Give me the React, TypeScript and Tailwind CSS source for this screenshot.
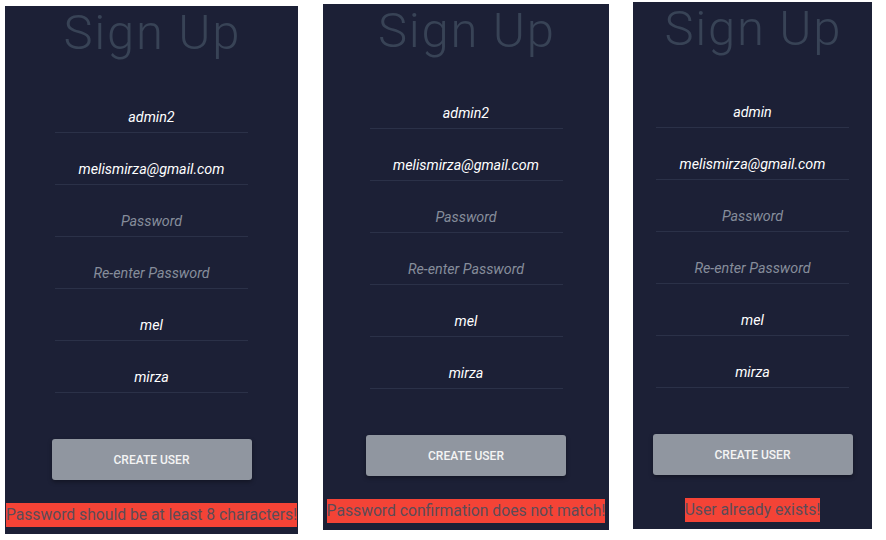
import React from "react";

type Field = { value: string; placeholder?: boolean };

function Panel({
  outer,
  fieldsMt,
  fields,
  error,
}: {
  outer: string;
  fieldsMt: string;
  fields: Field[];
  error: string;
}) {
  return (
    <div className={`${outer} bg-[#1c2036] flex flex-col items-center shrink-0`}>
      <h1 className="text-[49px] font-light leading-[53px] h-[53px] text-[#384356] tracking-[1.7px] pl-[1.7px]">
        Sign Up
      </h1>
      <div className={`${fieldsMt} flex flex-col w-[193px]`}>
        {fields.map((f, i) => (
          <div
            key={i}
            className="h-[52px] border-b border-[#2b3148] pt-[24px] text-center"
          >
            <span
              className={`italic text-[14.3px] leading-[16px] ${
                f.placeholder ? "text-[#868d9b]" : "text-white"
              }`}
            >
              {f.value}
            </span>
          </div>
        ))}
      </div>
      <button className="mt-[46px] w-[200px] h-[41px] rounded-[3px] bg-[#9096a0] text-[12px] font-medium text-[#f4f4f4] shadow-[0_2px_4px_rgba(0,0,0,0.35)]">
        CREATE USER
      </button>
      <div className="mt-[23px] h-[24px] bg-[#f44336] text-[15.7px] leading-[24px] text-[#5c4c58] whitespace-nowrap">
        {error}
      </div>
    </div>
  );
}

export default function App() {
  const base = (u: string): Field[] => [
    { value: u },
    { value: "melismirza@gmail.com" },
    { value: "Password", placeholder: true },
    { value: "Re-enter Password", placeholder: true },
    { value: "mel" },
    { value: "mirza" },
  ];
  return (
    <div
      className="w-[886px] h-[540px] bg-white flex items-start pl-[5px]"
      style={{ fontFamily: "Roboto, 'Liberation Sans', sans-serif" }}
    >
      <Panel
        outer="mt-[6px] w-[293px] h-[528px]"
        fieldsMt="mt-[22px]"
        fields={base("admin2")}
        error="Password should be at least 8 characters!"
      />
      <div className="w-[25px] shrink-0" />
      <Panel
        outer="mt-[4px] w-[286px] h-[526px]"
        fieldsMt="mt-[20px]"
        fields={base("admin2")}
        error="Password confirmation does not match!"
      />
      <div className="w-[24px] shrink-0" />
      <Panel
        outer="mt-[2px] w-[239px] h-[527px]"
        fieldsMt="mt-[21px]"
        fields={base("admin")}
        error="User already exists!"
      />
    </div>
  );
}
